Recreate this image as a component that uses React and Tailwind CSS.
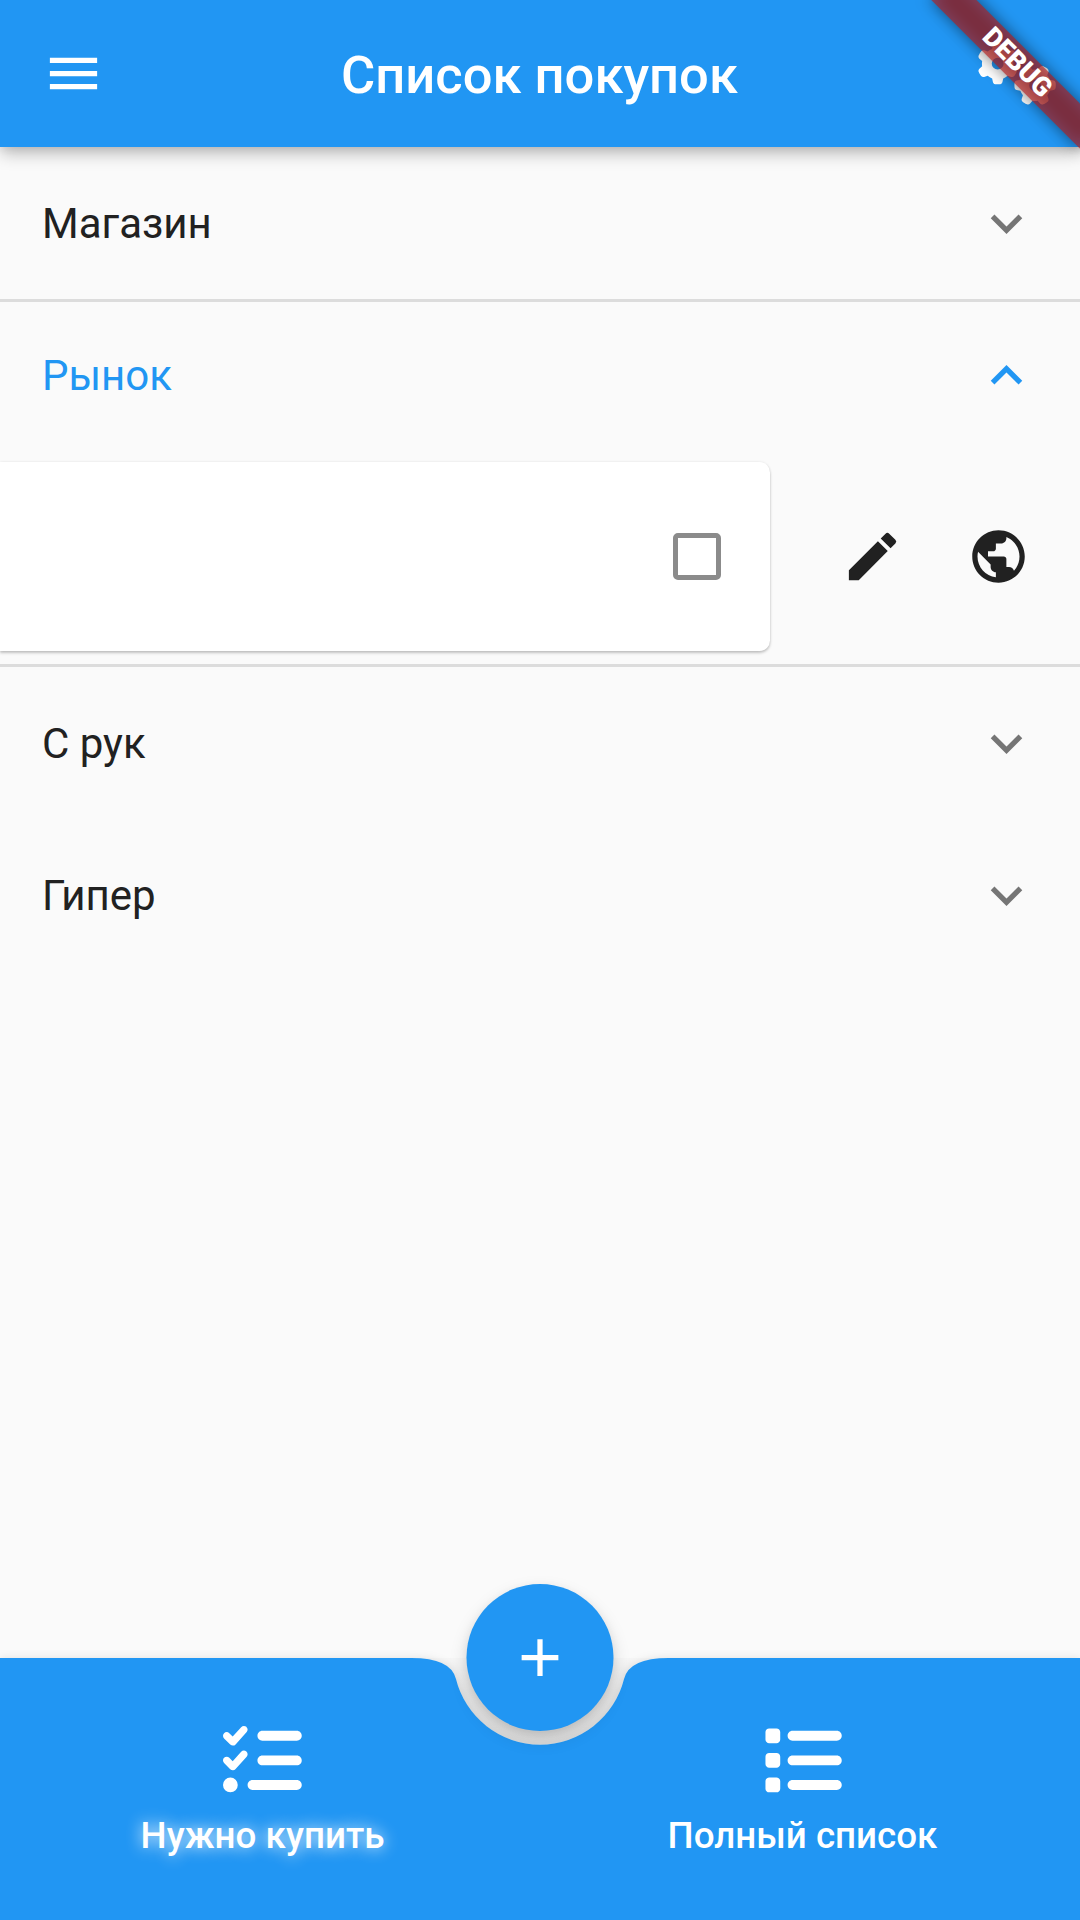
import { MdMenu, MdExpandMore, MdExpandLess, MdEdit, MdPublic, MdAdd } from "react-icons/md";
import { FaGears, FaListCheck, FaList } from "react-icons/fa6";

function AppBar() {
  return (
    <header className="relative z-10 grid h-[147px] grid-cols-[147px_1fr_147px] items-center bg-[#2196f3] text-white shadow-[0_7px_16px_-1px_rgba(0,0,0,0.27),0_2px_8px_rgba(0,0,0,0.06)]">
      <MdMenu className="ml-[42px] size-[63px]" />
      <h1 className="-ml-px pt-[3px] text-center text-[52.5px] leading-[61px] font-medium whitespace-nowrap">Список покупок</h1>
      <FaGears className="ml-[45px] h-[63px] w-[78.75px]" />
    </header>
  );
}

function TileHeader({ title, open = false }) {
  const Chevron = open ? MdExpandLess : MdExpandMore;
  return (
    <div className="flex h-[147px] items-center justify-between px-[42px]">
      <span className={open ? "text-[42px] leading-[49px] text-[#2196f3]" : "text-[42px] leading-[49px] text-[#212121]"}>
        {title}
      </span>
      <Chevron className={open ? "size-[63px] text-[#2196f3]" : "size-[63px] text-[#757575]"} />
    </div>
  );
}

function Tile({ title, open = false, children }) {
  return (
    <section>
      <div className={open ? "h-[2.625px] bg-[#dcdcdc]" : "h-[2.625px]"} />
      <TileHeader title={title} open={open} />
      {children}
      <div className={open ? "h-[2.625px] bg-[#dcdcdc]" : "h-[2.625px]"} />
    </section>
  );
}

function SlidItem() {
  return (
    <div className="flex h-[215.6px] items-center">
      <div className="flex h-[189px] w-[770px] items-center justify-end rounded-r-[10.5px] bg-white pr-[49.5px] shadow-[0_2px_3px_rgba(0,0,0,0.22),0_0_3px_rgba(0,0,0,0.08)]">
        <div className="size-[47.25px] rounded-[5px] border-[5.25px] border-[#8b8b8b]" />
      </div>
      <div className="ml-[39px] flex w-[126px] justify-center">
        <MdEdit className="size-[63px] text-[#212121]" />
      </div>
      <div className="flex w-[126px] justify-center">
        <MdPublic className="size-[63px] text-[#212121]" />
      </div>
    </div>
  );
}

function BottomBar() {
  return (
    <footer className="relative h-[262.5px]">
      {/* Bar background with the circular notch around the action button */}
      <svg className="absolute -top-[20px] left-0 overflow-visible" width="1080" height="282.5" viewBox="0 -20 1080 282.5">
        <defs>
          <linearGradient id="notch" x1="0" y1="-20" x2="0" y2="87" gradientUnits="userSpaceOnUse">
            <stop offset="0.1" stopColor="#000" stopOpacity="0" />
            <stop offset="0.5" stopColor="#000" stopOpacity="0.07" />
            <stop offset="1" stopColor="#000" stopOpacity="0.09" />
          </linearGradient>
        </defs>
        <path d="M411.4 0Q450.75 0 455.9 20.85A86.6 86.6 0 0 0 624.1 20.85Q629.25 0 668.6 0Z" fill="url(#notch)" />
        <path
          d="M0 0H411.4Q450.75 0 455.92 20.85A86.625 86.625 0 0 0 624.08 20.85Q629.25 0 668.6 0H1080V262.5H0Z"
          fill="#2196f3"
          className="drop-shadow-[0_0_4px_rgba(0,0,0,0.1)]"
        />
      </svg>
      <button className="absolute -top-[73.5px] left-[466px] z-10 flex size-[147px] translate-x-[0.5px] items-center justify-center rounded-full bg-[#2196f3] text-white shadow-[0_8px_18px_rgba(0,0,0,0.15),0_3px_10px_rgba(0,0,0,0.06)]">
        <MdAdd className="size-[63px]" />
      </button>
      <nav className="relative grid h-full grid-cols-[525px_555px] pt-[63px] text-white">
        <div className="flex flex-col items-center">
          <FaListCheck className="size-[78.75px]" />
          <span className="mt-[15px] text-[36.75px] leading-[43px] font-medium [text-shadow:0_0_16px_white]">Нужно купить</span>
        </div>
        <div className="flex flex-col items-center">
          <FaList className="size-[78.75px]" />
          <span className="mt-[15px] text-[36.75px] leading-[43px] font-medium">Полный список</span>
        </div>
      </nav>
    </footer>
  );
}

function DebugBanner() {
  return (
    <div className="pointer-events-none absolute top-0 right-0 z-20 size-[220px] overflow-hidden">
      {/* Soft shadow lying beneath the translucent ribbon */}
      <div className="absolute top-[47.36px] left-[51.9px] h-[31.5px] w-[210px] rotate-45 bg-black/50 blur-[8px]" />
      <div className="absolute top-[47.36px] left-[51.9px] flex h-[31.5px] w-[210px] rotate-45 items-center justify-center bg-[#b71c1c]/63 text-[26.775px] leading-none font-black text-white">
        DEBUG
      </div>
    </div>
  );
}

export default function App() {
  return (
    <div className="relative flex h-[1920px] w-[1080px] flex-col overflow-hidden bg-[#fafafa] font-['Roboto',sans-serif]">
      <AppBar />
      <main className="flex-1">
        <Tile title="Магазин" />
        <Tile title="Рынок" open>
          <SlidItem />
        </Tile>
        <Tile title="С рук" />
        <Tile title="Гипер" />
      </main>
      <BottomBar />
      <DebugBanner />
    </div>
  );
}
